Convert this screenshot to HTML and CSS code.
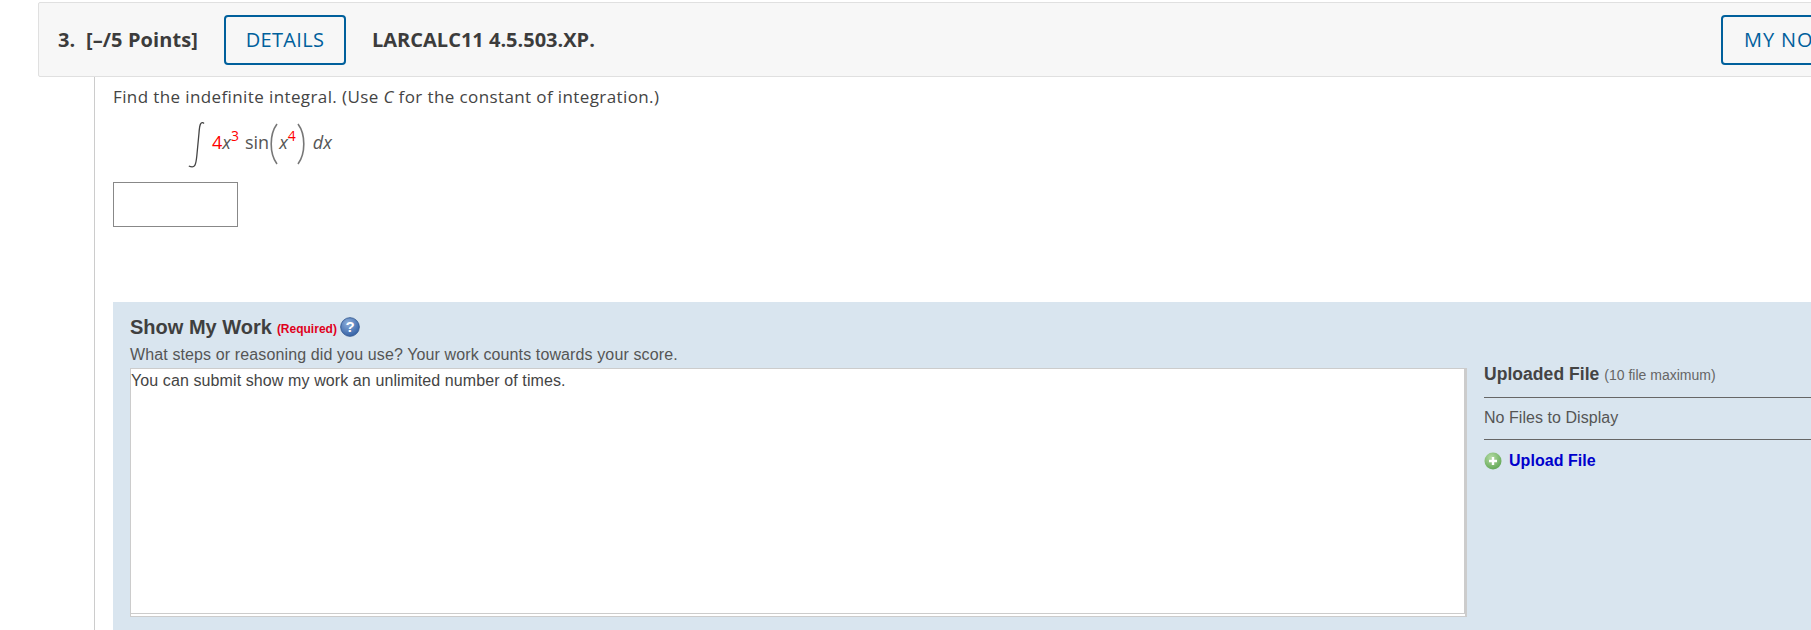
FILE: index.html
```html
<!DOCTYPE html>
<html lang="en">
<head>
  <meta charset="UTF-8" />
  <title>Question 3</title>
  <link rel="stylesheet" href="styles.css">
</head>
<body>
  <div class="question">
    <div class="q-header">
      <div class="q-points">3.&nbsp; [–/5 Points]</div>
      <button class="q-btn">DETAILS</button>
      <div class="q-code">LARCALC11 4.5.503.XP.</div>
      <button class="q-btn q-notes">MY NOTES</button>
    </div>

    <div class="q-body">
      <p class="prompt">Find the indefinite integral. (Use <i>C</i> for the constant of integration.)</p>

      <div class="math">
        <svg class="integral" width="18" height="48" viewBox="0 0 18 48">
          <path d="M17 2.500c-1-1.200-2.600-1-3.400 0.400c-1 1.700-1.300 5-1.600 9.100l-2.200 23c-0.400 4-0.800 7.500-2 9.400c-0.900 1.500-3 2-6 0.600" fill="none" stroke="#444" stroke-width="1.300"/>
        </svg>
        <span class="red">4</span><i>x</i><sup class="red">3</sup>
        <span class="fn">sin</span>
        <svg class="paren" width="8" height="42" viewBox="0 0 8 42">
          <path d="M7 1C2.500 7 1.200 14 1.200 21S2.500 35 7 41" fill="none" stroke="#777" stroke-width="1.600"/>
        </svg>
        <i>x</i><sup class="red">4</sup>
        <svg class="paren" width="8" height="42" viewBox="0 0 8 42">
          <path d="M1 1C5.500 7 6.800 14 6.800 21S5.500 35 1 41" fill="none" stroke="#777" stroke-width="1.600"/>
        </svg>
        <i class="dx">dx</i>
      </div>

      <input type="text" class="answer">

      <div class="work">
        <div class="work-title">
          Show My Work <span class="required">(Required)</span>
          <svg class="help" width="20" height="20" viewBox="0 0 20 20">
            <defs>
              <radialGradient id="helpFill" cx="40%" cy="30%" r="75%">
                <stop offset="0" stop-color="#8fb0dc"/>
                <stop offset="1" stop-color="#2f5da3"/>
              </radialGradient>
            </defs>
            <circle cx="10" cy="10" r="9.300" fill="url(#helpFill)" stroke="#3d6299"/>
            <text x="10" y="15" text-anchor="middle" class="help-mark">?</text>
          </svg>
        </div>
        <div class="work-hint">What steps or reasoning did you use? Your work counts towards your score.</div>

        <div class="work-row">
          <div class="work-box">
            <textarea class="work-text">You can submit show my work an unlimited number of times.</textarea>
          </div>
          <div class="files">
            <div class="files-title"><b>Uploaded File</b> <span class="files-max">(10 file maximum)</span></div>
            <div class="files-empty">No Files to Display</div>
            <a class="upload" href="#">
              <svg width="18" height="18" viewBox="0 0 18 18">
                <defs>
                  <radialGradient id="addFill" cx="40%" cy="30%" r="75%">
                    <stop offset="0" stop-color="#b5dca5"/>
                    <stop offset="1" stop-color="#5fa552"/>
                  </radialGradient>
                </defs>
                <circle cx="9" cy="9" r="8.500" fill="url(#addFill)"/>
                <path d="M9 5v8M5 9h8" stroke="#fff" stroke-width="2.400"/>
              </svg>
              Upload File
            </a>
          </div>
        </div>
      </div>
    </div>
  </div>
</body>
</html>
```

FILE: styles.css
```css
html, body {
  margin: 0;
  height: 630px;
  overflow: hidden;
  background-color: #fff;
}

.question {
  width: 1900px;
  margin-left: 38px;
  padding-top: 2px;
  color: #444;
}

.q-header {
  display: flex;
  align-items: center;
  height: 73px;
  padding-left: 19px;
  background-color: #f7f7f7;
  border: 1px solid #e0e0e0;
  border-radius: 2px 0 0 2px;
  font-family: "Open Sans", sans-serif;
  font-size: 20px;
}

.q-points {
  font-weight: 700;
  width: 166px;
  white-space: nowrap;
  letter-spacing: 0.1px;
  color: #3c3c3c;
}

.q-btn {
  font-family: "Open Sans", sans-serif;
  font-size: 20px;
  height: 50px;
  width: 122px;
  padding: 0;
  letter-spacing: 0.3px;
  color: #00609c;
  background-color: transparent;
  border: 2px solid #00609c;
  border-radius: 4px;
}

.q-code {
  flex: 1;
  margin-left: 26px;
  font-weight: 700;
  color: #3c3c3c;
}

.q-notes {
  width: 216px;
  padding-left: 21px;
  text-align: left;
  letter-spacing: 0.9px;
}

.q-body {
  margin-left: 56px;
  padding-left: 18px;
  height: 560px;
  border-left: 1px solid #ccc;
  font-family: "Open Sans", sans-serif;
}

.prompt {
  margin: 0;
  padding-top: 9px;
  font-size: 17px;
  line-height: 22px;
  letter-spacing: 0.39px;
}

.math {
  display: flex;
  align-items: center;
  height: 50px;
  margin-top: 12px;
  padding-left: 74px;
  font-size: 18px;
  color: #555;
}

.math span, .math i {
  margin-bottom: 6px;
}

.integral {
  margin-right: 7px;
}

.math sup {
  font-size: 14px;
  align-self: flex-start;
  margin-top: 6px;
}

.red {
  color: #f00;
}

.fn {
  margin-left: 6px;
}

.paren {
  margin: 0 1px 3px;
}

.dx {
  margin-left: 7px;
}

.answer {
  display: block;
  box-sizing: border-box;
  width: 125px;
  height: 45px;
  margin-top: 12px;
  border: 1px solid #888;
  background-color: #fff;
}

.work {
  box-sizing: border-box;
  margin-top: 75px;
  height: 400px;
  padding: 12px 0 0 17px;
  background-color: #d9e5ef;
  font-family: "Liberation Sans", Arial, sans-serif;
}

.work-title {
  display: flex;
  align-items: center;
  height: 26px;
  font-size: 20px;
  font-weight: 700;
  color: #3f3f3f;
}

.required {
  margin: 3px 3px 0 5px;
  font-size: 12px;
  font-weight: 700;
  color: #e0001b;
}

.work-hint {
  margin-top: 5px;
  font-size: 16px;
  line-height: 20px;
  letter-spacing: 0.12px;
  color: #555;
}

.work-row {
  display: flex;
  margin-top: 3px;
}

.work-box {
  box-sizing: border-box;
  width: 1337px;
  height: 249px;
  border: 1px solid #ccc;
  border-width: 1px 2px 1px 1px;
  padding-bottom: 2px;
  background-color: #fff;
}

.work-text {
  display: block;
  box-sizing: border-box;
  width: 100%;
  height: 100%;
  margin: 0;
  padding: 2px 0 0 0;
  border: 0;
  border-bottom: 1px solid #ccc;
  border-right: 1px solid #ccc;
  outline: 0;
  resize: none;
  font-family: "Liberation Sans", Arial, sans-serif;
  font-size: 16px;
  line-height: 19px;
  letter-spacing: 0.1px;
  color: #444;
}

.files {
  flex: 1;
  margin-left: 17px;
  font-size: 16px;
  letter-spacing: 0.05px;
  color: #555;
}

.files-title {
  height: 29px;
  line-height: 12px;
  font-size: 17.500px;
  border-bottom: 1px solid #666;
}

.files-title b {
  color: #444;
}

.files-max {
  font-size: 14px;
  letter-spacing: 0;
  color: #666;
}

.files-empty {
  height: 41px;
  line-height: 40px;
  border-bottom: 1px solid #666;
}

.upload {
  display: flex;
  align-items: center;
  gap: 7px;
  margin-top: 12px;
  font-weight: 700;
  color: #0000cc;
  text-decoration: none;
}

.help {
  display: block;
}

.help-mark {
  font-family: "Liberation Sans", Arial, sans-serif;
  font-size: 15px;
  font-weight: 700;
  fill: #fff;
}
```
